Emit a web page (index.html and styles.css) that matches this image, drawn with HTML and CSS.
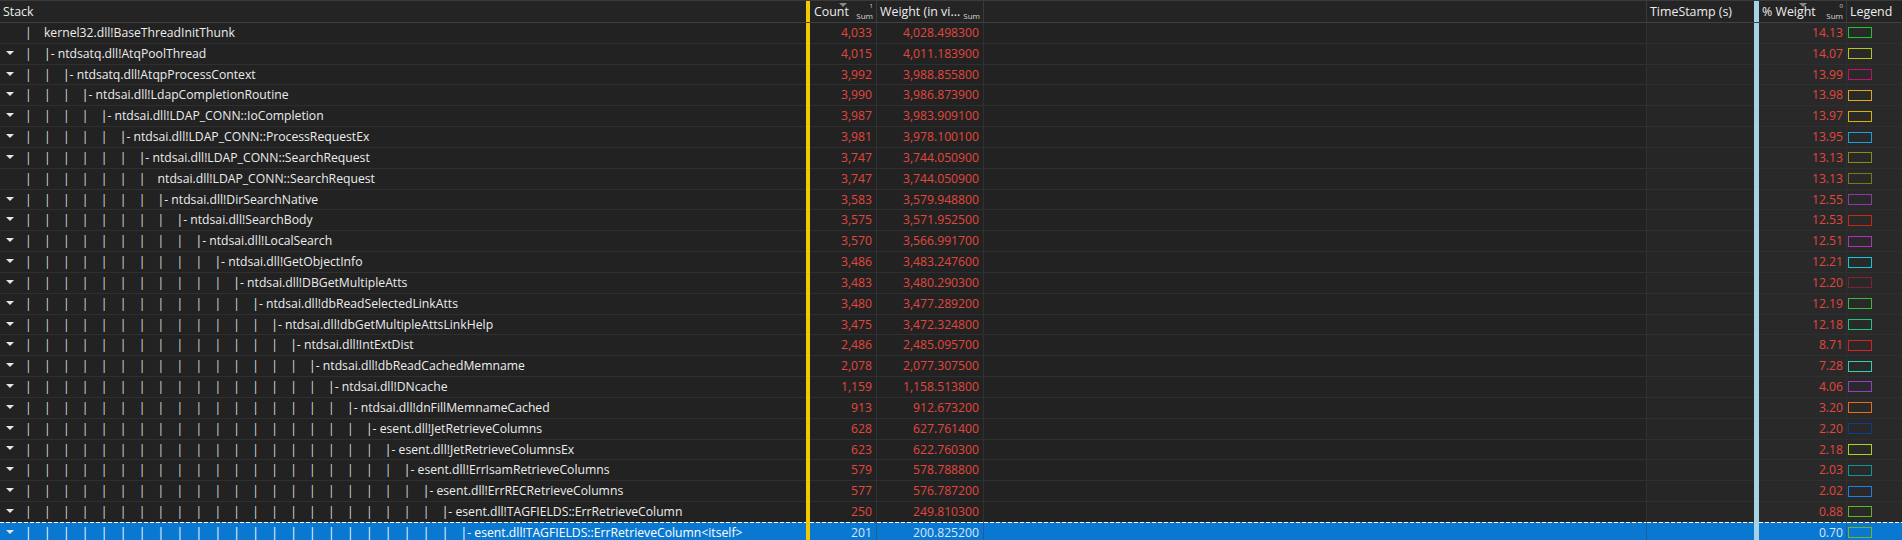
FILE: index.html
```html
<!DOCTYPE html>
<html>
<head>
<meta charset="utf-8">
<link rel="stylesheet" href="styles.css">
</head>
<body>
<div class="table">
  <div class="row hdr">
    <div class="h">Stack</div>
    <div class="bar y"></div>
    <div class="h hs"><span class="arrow"></span><span class="lbl">Count</span><span class="sumbox"><span class="sup">1</span><span class="sum">Sum</span></span></div>
    <div class="h hs"><span class="lbl">Weight (in vi...</span><span class="sumbox"><span class="sup"></span><span class="sum">Sum</span></span></div>
    <div class="h"></div>
    <div class="h ts">TimeStamp (s)</div>
    <div class="bar b"></div>
    <div class="h hs pc"><span class="arrow"></span><span class="lbl">% Weight</span><span class="sumbox"><span class="sup">0</span><span class="sum">Sum</span></span></div>
    <div class="h lgh">Legend</div>
  </div>

  <div class="row">
    <div class="c stack"><span class="tw"></span><span class="g">|</span><span class="nm">kernel32.dll!BaseThreadInitThunk</span></div>
    <div class="bar y"></div><div class="c num">4,033</div><div class="c num">4,028.498300</div><div class="c blank"></div><div class="c ts"></div><div class="bar b"></div><div class="c num pc">14.13</div>
    <div class="c lg"><span class="sw" style="border-color:#1fc42a"></span></div>
  </div>
  <div class="row">
    <div class="c stack"><span class="tw"><i class="tri"></i></span><span class="g">|</span><span class="nm">|- ntdsatq.dll!AtqPoolThread</span></div>
    <div class="bar y"></div><div class="c num">4,015</div><div class="c num">4,011.183900</div><div class="c blank"></div><div class="c ts"></div><div class="bar b"></div><div class="c num pc">14.07</div>
    <div class="c lg"><span class="sw" style="border-color:#bcc41c"></span></div>
  </div>
  <div class="row">
    <div class="c stack"><span class="tw"><i class="tri"></i></span><span class="g">|</span><span class="g">|</span><span class="nm">|- ntdsatq.dll!AtqpProcessContext</span></div>
    <div class="bar y"></div><div class="c num">3,992</div><div class="c num">3,988.855800</div><div class="c blank"></div><div class="c ts"></div><div class="bar b"></div><div class="c num pc">13.99</div>
    <div class="c lg"><span class="sw" style="border-color:#c0126c"></span></div>
  </div>
  <div class="row">
    <div class="c stack"><span class="tw"><i class="tri"></i></span><span class="g">|</span><span class="g">|</span><span class="g">|</span><span class="nm">|- ntdsai.dll!LdapCompletionRoutine</span></div>
    <div class="bar y"></div><div class="c num">3,990</div><div class="c num">3,986.873900</div><div class="c blank"></div><div class="c ts"></div><div class="bar b"></div><div class="c num pc">13.98</div>
    <div class="c lg"><span class="sw" style="border-color:#e0a81c"></span></div>
  </div>
  <div class="row">
    <div class="c stack"><span class="tw"><i class="tri"></i></span><span class="g">|</span><span class="g">|</span><span class="g">|</span><span class="g">|</span><span class="nm">|- ntdsai.dll!LDAP_CONN::IoCompletion</span></div>
    <div class="bar y"></div><div class="c num">3,987</div><div class="c num">3,983.909100</div><div class="c blank"></div><div class="c ts"></div><div class="bar b"></div><div class="c num pc">13.97</div>
    <div class="c lg"><span class="sw" style="border-color:#e0b000"></span></div>
  </div>
  <div class="row">
    <div class="c stack"><span class="tw"><i class="tri"></i></span><span class="g">|</span><span class="g">|</span><span class="g">|</span><span class="g">|</span><span class="g">|</span><span class="nm">|- ntdsai.dll!LDAP_CONN::ProcessRequestEx</span></div>
    <div class="bar y"></div><div class="c num">3,981</div><div class="c num">3,978.100100</div><div class="c blank"></div><div class="c ts"></div><div class="bar b"></div><div class="c num pc">13.95</div>
    <div class="c lg"><span class="sw" style="border-color:#1aa0dc"></span></div>
  </div>
  <div class="row">
    <div class="c stack"><span class="tw"><i class="tri"></i></span><span class="g">|</span><span class="g">|</span><span class="g">|</span><span class="g">|</span><span class="g">|</span><span class="g">|</span><span class="nm">|- ntdsai.dll!LDAP_CONN::SearchRequest</span></div>
    <div class="bar y"></div><div class="c num">3,747</div><div class="c num">3,744.050900</div><div class="c blank"></div><div class="c ts"></div><div class="bar b"></div><div class="c num pc">13.13</div>
    <div class="c lg"><span class="sw" style="border-color:#8c8c14"></span></div>
  </div>
  <div class="row">
    <div class="c stack"><span class="tw"></span><span class="g">|</span><span class="g">|</span><span class="g">|</span><span class="g">|</span><span class="g">|</span><span class="g">|</span><span class="g">|</span><span class="nm">ntdsai.dll!LDAP_CONN::SearchRequest</span></div>
    <div class="bar y"></div><div class="c num">3,747</div><div class="c num">3,744.050900</div><div class="c blank"></div><div class="c ts"></div><div class="bar b"></div><div class="c num pc">13.13</div>
    <div class="c lg"><span class="sw" style="border-color:#7a7a14"></span></div>
  </div>
  <div class="row">
    <div class="c stack"><span class="tw"><i class="tri"></i></span><span class="g">|</span><span class="g">|</span><span class="g">|</span><span class="g">|</span><span class="g">|</span><span class="g">|</span><span class="g">|</span><span class="nm">|- ntdsai.dll!DirSearchNative</span></div>
    <div class="bar y"></div><div class="c num">3,583</div><div class="c num">3,579.948800</div><div class="c blank"></div><div class="c ts"></div><div class="bar b"></div><div class="c num pc">12.55</div>
    <div class="c lg"><span class="sw" style="border-color:#8a3c9c"></span></div>
  </div>
  <div class="row">
    <div class="c stack"><span class="tw"><i class="tri"></i></span><span class="g">|</span><span class="g">|</span><span class="g">|</span><span class="g">|</span><span class="g">|</span><span class="g">|</span><span class="g">|</span><span class="g">|</span><span class="nm">|- ntdsai.dll!SearchBody</span></div>
    <div class="bar y"></div><div class="c num">3,575</div><div class="c num">3,571.952500</div><div class="c blank"></div><div class="c ts"></div><div class="bar b"></div><div class="c num pc">12.53</div>
    <div class="c lg"><span class="sw" style="border-color:#c02c10"></span></div>
  </div>
  <div class="row">
    <div class="c stack"><span class="tw"><i class="tri"></i></span><span class="g">|</span><span class="g">|</span><span class="g">|</span><span class="g">|</span><span class="g">|</span><span class="g">|</span><span class="g">|</span><span class="g">|</span><span class="g">|</span><span class="nm">|- ntdsai.dll!LocalSearch</span></div>
    <div class="bar y"></div><div class="c num">3,570</div><div class="c num">3,566.991700</div><div class="c blank"></div><div class="c ts"></div><div class="bar b"></div><div class="c num pc">12.51</div>
    <div class="c lg"><span class="sw" style="border-color:#b030c0"></span></div>
  </div>
  <div class="row">
    <div class="c stack"><span class="tw"><i class="tri"></i></span><span class="g">|</span><span class="g">|</span><span class="g">|</span><span class="g">|</span><span class="g">|</span><span class="g">|</span><span class="g">|</span><span class="g">|</span><span class="g">|</span><span class="g">|</span><span class="nm">|- ntdsai.dll!GetObjectInfo</span></div>
    <div class="bar y"></div><div class="c num">3,486</div><div class="c num">3,483.247600</div><div class="c blank"></div><div class="c ts"></div><div class="bar b"></div><div class="c num pc">12.21</div>
    <div class="c lg"><span class="sw" style="border-color:#10c8d8"></span></div>
  </div>
  <div class="row">
    <div class="c stack"><span class="tw"><i class="tri"></i></span><span class="g">|</span><span class="g">|</span><span class="g">|</span><span class="g">|</span><span class="g">|</span><span class="g">|</span><span class="g">|</span><span class="g">|</span><span class="g">|</span><span class="g">|</span><span class="g">|</span><span class="nm">|- ntdsai.dll!DBGetMultipleAtts</span></div>
    <div class="bar y"></div><div class="c num">3,483</div><div class="c num">3,480.290300</div><div class="c blank"></div><div class="c ts"></div><div class="bar b"></div><div class="c num pc">12.20</div>
    <div class="c lg"><span class="sw" style="border-color:#7c2430"></span></div>
  </div>
  <div class="row">
    <div class="c stack"><span class="tw"><i class="tri"></i></span><span class="g">|</span><span class="g">|</span><span class="g">|</span><span class="g">|</span><span class="g">|</span><span class="g">|</span><span class="g">|</span><span class="g">|</span><span class="g">|</span><span class="g">|</span><span class="g">|</span><span class="g">|</span><span class="nm">|- ntdsai.dll!dbReadSelectedLinkAtts</span></div>
    <div class="bar y"></div><div class="c num">3,480</div><div class="c num">3,477.289200</div><div class="c blank"></div><div class="c ts"></div><div class="bar b"></div><div class="c num pc">12.19</div>
    <div class="c lg"><span class="sw" style="border-color:#3cb83c"></span></div>
  </div>
  <div class="row">
    <div class="c stack"><span class="tw"><i class="tri"></i></span><span class="g">|</span><span class="g">|</span><span class="g">|</span><span class="g">|</span><span class="g">|</span><span class="g">|</span><span class="g">|</span><span class="g">|</span><span class="g">|</span><span class="g">|</span><span class="g">|</span><span class="g">|</span><span class="g">|</span><span class="nm">|- ntdsai.dll!dbGetMultipleAttsLinkHelp</span></div>
    <div class="bar y"></div><div class="c num">3,475</div><div class="c num">3,472.324800</div><div class="c blank"></div><div class="c ts"></div><div class="bar b"></div><div class="c num pc">12.18</div>
    <div class="c lg"><span class="sw" style="border-color:#20c47c"></span></div>
  </div>
  <div class="row">
    <div class="c stack"><span class="tw"><i class="tri"></i></span><span class="g">|</span><span class="g">|</span><span class="g">|</span><span class="g">|</span><span class="g">|</span><span class="g">|</span><span class="g">|</span><span class="g">|</span><span class="g">|</span><span class="g">|</span><span class="g">|</span><span class="g">|</span><span class="g">|</span><span class="g">|</span><span class="nm">|- ntdsai.dll!IntExtDist</span></div>
    <div class="bar y"></div><div class="c num">2,486</div><div class="c num">2,485.095700</div><div class="c blank"></div><div class="c ts"></div><div class="bar b"></div><div class="c num pc">8.71</div>
    <div class="c lg"><span class="sw" style="border-color:#d82020"></span></div>
  </div>
  <div class="row">
    <div class="c stack"><span class="tw"><i class="tri"></i></span><span class="g">|</span><span class="g">|</span><span class="g">|</span><span class="g">|</span><span class="g">|</span><span class="g">|</span><span class="g">|</span><span class="g">|</span><span class="g">|</span><span class="g">|</span><span class="g">|</span><span class="g">|</span><span class="g">|</span><span class="g">|</span><span class="g">|</span><span class="nm">|- ntdsai.dll!dbReadCachedMemname</span></div>
    <div class="bar y"></div><div class="c num">2,078</div><div class="c num">2,077.307500</div><div class="c blank"></div><div class="c ts"></div><div class="bar b"></div><div class="c num pc">7.28</div>
    <div class="c lg"><span class="sw" style="border-color:#30d0b0"></span></div>
  </div>
  <div class="row">
    <div class="c stack"><span class="tw"><i class="tri"></i></span><span class="g">|</span><span class="g">|</span><span class="g">|</span><span class="g">|</span><span class="g">|</span><span class="g">|</span><span class="g">|</span><span class="g">|</span><span class="g">|</span><span class="g">|</span><span class="g">|</span><span class="g">|</span><span class="g">|</span><span class="g">|</span><span class="g">|</span><span class="g">|</span><span class="nm">|- ntdsai.dll!DNcache</span></div>
    <div class="bar y"></div><div class="c num">1,159</div><div class="c num">1,158.513800</div><div class="c blank"></div><div class="c ts"></div><div class="bar b"></div><div class="c num pc">4.06</div>
    <div class="c lg"><span class="sw" style="border-color:#9040c0"></span></div>
  </div>
  <div class="row">
    <div class="c stack"><span class="tw"><i class="tri"></i></span><span class="g">|</span><span class="g">|</span><span class="g">|</span><span class="g">|</span><span class="g">|</span><span class="g">|</span><span class="g">|</span><span class="g">|</span><span class="g">|</span><span class="g">|</span><span class="g">|</span><span class="g">|</span><span class="g">|</span><span class="g">|</span><span class="g">|</span><span class="g">|</span><span class="g">|</span><span class="nm">|- ntdsai.dll!dnFillMemnameCached</span></div>
    <div class="bar y"></div><div class="c num">913</div><div class="c num">912.673200</div><div class="c blank"></div><div class="c ts"></div><div class="bar b"></div><div class="c num pc">3.20</div>
    <div class="c lg"><span class="sw" style="border-color:#e07020"></span></div>
  </div>
  <div class="row">
    <div class="c stack"><span class="tw"><i class="tri"></i></span><span class="g">|</span><span class="g">|</span><span class="g">|</span><span class="g">|</span><span class="g">|</span><span class="g">|</span><span class="g">|</span><span class="g">|</span><span class="g">|</span><span class="g">|</span><span class="g">|</span><span class="g">|</span><span class="g">|</span><span class="g">|</span><span class="g">|</span><span class="g">|</span><span class="g">|</span><span class="g">|</span><span class="nm">|- esent.dll!JetRetrieveColumns</span></div>
    <div class="bar y"></div><div class="c num">628</div><div class="c num">627.761400</div><div class="c blank"></div><div class="c ts"></div><div class="bar b"></div><div class="c num pc">2.20</div>
    <div class="c lg"><span class="sw" style="border-color:#103c8c"></span></div>
  </div>
  <div class="row">
    <div class="c stack"><span class="tw"><i class="tri"></i></span><span class="g">|</span><span class="g">|</span><span class="g">|</span><span class="g">|</span><span class="g">|</span><span class="g">|</span><span class="g">|</span><span class="g">|</span><span class="g">|</span><span class="g">|</span><span class="g">|</span><span class="g">|</span><span class="g">|</span><span class="g">|</span><span class="g">|</span><span class="g">|</span><span class="g">|</span><span class="g">|</span><span class="g">|</span><span class="nm">|- esent.dll!JetRetrieveColumnsEx</span></div>
    <div class="bar y"></div><div class="c num">623</div><div class="c num">622.760300</div><div class="c blank"></div><div class="c ts"></div><div class="bar b"></div><div class="c num pc">2.18</div>
    <div class="c lg"><span class="sw" style="border-color:#a8d420"></span></div>
  </div>
  <div class="row">
    <div class="c stack"><span class="tw"><i class="tri"></i></span><span class="g">|</span><span class="g">|</span><span class="g">|</span><span class="g">|</span><span class="g">|</span><span class="g">|</span><span class="g">|</span><span class="g">|</span><span class="g">|</span><span class="g">|</span><span class="g">|</span><span class="g">|</span><span class="g">|</span><span class="g">|</span><span class="g">|</span><span class="g">|</span><span class="g">|</span><span class="g">|</span><span class="g">|</span><span class="g">|</span><span class="nm">|- esent.dll!ErrIsamRetrieveColumns</span></div>
    <div class="bar y"></div><div class="c num">579</div><div class="c num">578.788800</div><div class="c blank"></div><div class="c ts"></div><div class="bar b"></div><div class="c num pc">2.03</div>
    <div class="c lg"><span class="sw" style="border-color:#109494"></span></div>
  </div>
  <div class="row">
    <div class="c stack"><span class="tw"><i class="tri"></i></span><span class="g">|</span><span class="g">|</span><span class="g">|</span><span class="g">|</span><span class="g">|</span><span class="g">|</span><span class="g">|</span><span class="g">|</span><span class="g">|</span><span class="g">|</span><span class="g">|</span><span class="g">|</span><span class="g">|</span><span class="g">|</span><span class="g">|</span><span class="g">|</span><span class="g">|</span><span class="g">|</span><span class="g">|</span><span class="g">|</span><span class="g">|</span><span class="nm">|- esent.dll!ErrRECRetrieveColumns</span></div>
    <div class="bar y"></div><div class="c num">577</div><div class="c num">576.787200</div><div class="c blank"></div><div class="c ts"></div><div class="bar b"></div><div class="c num pc">2.02</div>
    <div class="c lg"><span class="sw" style="border-color:#2080e8"></span></div>
  </div>
  <div class="row">
    <div class="c stack"><span class="tw"><i class="tri"></i></span><span class="g">|</span><span class="g">|</span><span class="g">|</span><span class="g">|</span><span class="g">|</span><span class="g">|</span><span class="g">|</span><span class="g">|</span><span class="g">|</span><span class="g">|</span><span class="g">|</span><span class="g">|</span><span class="g">|</span><span class="g">|</span><span class="g">|</span><span class="g">|</span><span class="g">|</span><span class="g">|</span><span class="g">|</span><span class="g">|</span><span class="g">|</span><span class="g">|</span><span class="nm">|- esent.dll!TAGFIELDS::ErrRetrieveColumn</span></div>
    <div class="bar y"></div><div class="c num">250</div><div class="c num">249.810300</div><div class="c blank"></div><div class="c ts"></div><div class="bar b"></div><div class="c num pc">0.88</div>
    <div class="c lg"><span class="sw" style="border-color:#64b41c"></span></div>
  </div>
  <div class="row sel">
    <div class="c stack"><span class="tw"><i class="tri"></i></span><span class="g">|</span><span class="g">|</span><span class="g">|</span><span class="g">|</span><span class="g">|</span><span class="g">|</span><span class="g">|</span><span class="g">|</span><span class="g">|</span><span class="g">|</span><span class="g">|</span><span class="g">|</span><span class="g">|</span><span class="g">|</span><span class="g">|</span><span class="g">|</span><span class="g">|</span><span class="g">|</span><span class="g">|</span><span class="g">|</span><span class="g">|</span><span class="g">|</span><span class="g">|</span><span class="nm">|- esent.dll!TAGFIELDS::ErrRetrieveColumn&lt;itself&gt;</span></div>
    <div class="bar y"></div><div class="c num">201</div><div class="c num">200.825200</div><div class="c blank"></div><div class="c ts"></div><div class="bar b"></div><div class="c num pc">0.70</div>
    <div class="c lg"><span class="sw" style="border-color:#78b41c"></span></div>
  </div>
</div>
</body>
</html>
```

FILE: styles.css
```css
html, body {
  margin: 0;
  padding: 0;
}
body {
  background: #222222;
  font-family: "Open Sans", "Noto Sans", sans-serif;
  font-size: 12.2px;
  color: #ececec;
  width: 1902px;
  height: 540px;
  overflow: hidden;
}
.table {
  display: flex;
  flex-direction: column;
}
.row {
  display: grid;
  grid-template-columns: 806px 4px 67px 107px 663px 107px 5px 88px 55px;
  height: 20.833px;
}
.hdr {
  height: 23px;
  box-sizing: border-box;
  border-top: 1px solid #3a3a3a;
  border-bottom: 1px solid #414141;
  background: #242424;
}
.bar.y { background: #f2c800; }
.bar.b { background: #a6d2e4; }

.h {
  box-sizing: border-box;
  padding-left: 3px;
  line-height: 20px;
  padding-top: 1px;
  white-space: nowrap;
  overflow: hidden;
  position: relative;
  font-size: 12.4px;
}
.hdr .h:nth-child(3),
.hdr .h:nth-child(4),
.hdr .h:nth-child(5),
.hdr .h.pc {
  border-right: 1px solid #3a3a3a;
}
.hdr .h:nth-child(3) { padding-left: 4px; }
.hs {
  display: flex;
  padding-right: 3px;
}
.hs .lbl { flex: 1; }
.sumbox {
  display: flex;
  flex-direction: column;
  align-items: flex-end;
  color: #d8d8d8;
  margin-top: -1px;
}
.sup {
  font-size: 6px;
  line-height: 7px;
  height: 8px;
  padding-top: 2px;
}
.sum {
  font-size: 8px;
  line-height: 10px;
}
.arrow {
  position: absolute;
  top: 2px;
  left: 50%;
  margin-left: -4px;
  width: 0;
  height: 0;
  border-left: 4px solid transparent;
  border-right: 4px solid transparent;
  border-top: 4px solid #8a8a8a;
}

.c {
  box-sizing: border-box;
  border-bottom: 1px solid #2f2f2f;
  line-height: 19.8px;
  white-space: nowrap;
  overflow: hidden;
}
.stack {
  display: flex;
}
.tw {
  flex: none;
  width: 25px;
  display: flex;
  align-items: center;
}
.tri {
  display: block;
  margin-left: 6px;
  margin-top: -2px;
  width: 0;
  height: 0;
  border-left: 4px solid transparent;
  border-right: 4px solid transparent;
  border-top: 4px solid #e6e6e6;
}
.g {
  flex: none;
  width: 18.95px;
  color: #dadada;
}
.nm {
  flex: none;
}
.num {
  text-align: right;
  color: #e2473d;
  padding-right: 4px;
  border-right: 1px solid #303030;
}
.num.pc { padding-right: 3px; }
.blank { border-right: 1px solid #303030; }
.ts { background: #262626; }
.hdr .ts { background: #242424; }
.pc { background: #292929; }
.hdr .pc { background: #242424; }
.lg {
  background: #292929;
  display: flex;
  align-items: center;
}
.sw {
  display: block;
  width: 24px;
  height: 11px;
  box-sizing: border-box;
  border: 1px solid;
  margin-left: 1px;
}

.sel {
  margin-top: -1px;
  height: 22px;
}
.sel .c {
  border-bottom: none;
  background: repeating-linear-gradient(90deg, #ffffff 0 4px, transparent 4px 6px) top left / 100% 1px no-repeat, #0a78d0;
  line-height: 21px;
  color: #ffffff;
}
.sel .g { color: #ffffff; }
.sel .num { color: #d4e6f8; border-right-color: #1a5f96; }
.sel .blank { border-right-color: #1a5f96; }
```
